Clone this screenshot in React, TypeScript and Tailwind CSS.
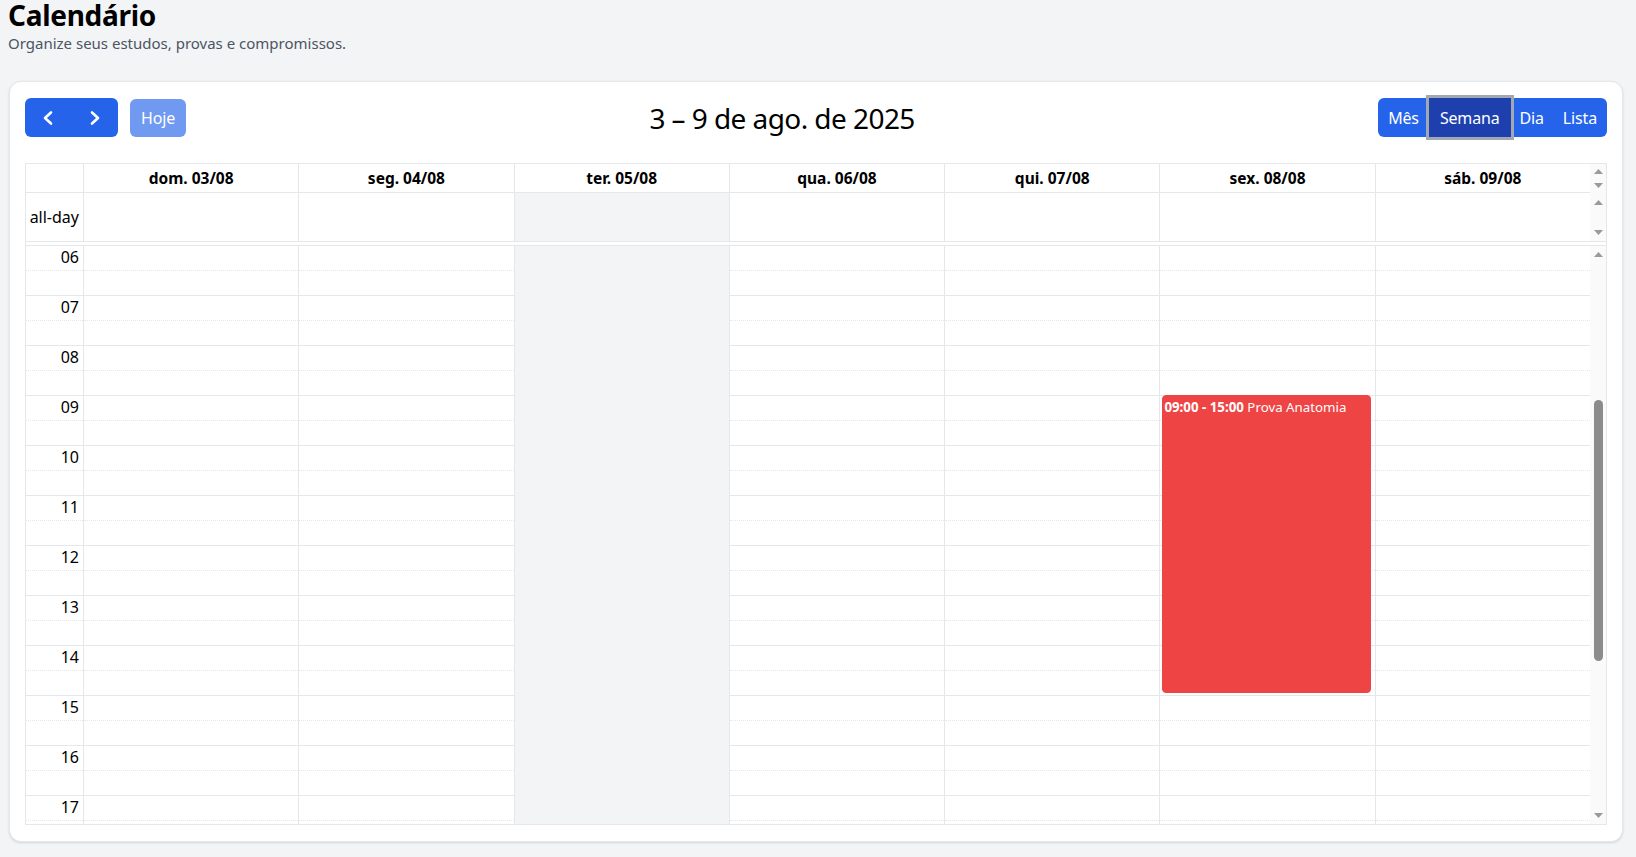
import React from "react";

const days = [
  "dom. 03/08",
  "seg. 04/08",
  "ter. 05/08",
  "qua. 06/08",
  "qui. 07/08",
  "sex. 08/08",
  "sáb. 09/08",
];
const TODAY = 2;
const EVENT_DAY = 5;
const slots = Array.from({ length: 24 }, (_, i) => i); // 06:00 .. 17:30

function Up() {
  return (
    <svg width="9" height="5" viewBox="0 0 9 5" className="block">
      <polygon points="0,5 4.5,0 9,5" fill="#9a9a9a" />
    </svg>
  );
}
function Down() {
  return (
    <svg width="9" height="5" viewBox="0 0 9 5" className="block">
      <polygon points="0,0 9,0 4.5,5" fill="#9a9a9a" />
    </svg>
  );
}

function Chevron({ dir }: { dir: "left" | "right" }) {
  return (
    <svg width="14" height="16" viewBox="0 0 14 16" fill="none" className="block">
      <polyline
        points={dir === "left" ? "10,2.5 4,8 10,13.5" : "4,2.5 10,8 4,13.5"}
        stroke="white"
        strokeWidth="2.6"
        strokeLinecap="round"
        strokeLinejoin="round"
      />
    </svg>
  );
}

function SlotCell({ i, today }: { i: number; today?: boolean }) {
  const minor = i % 2 === 0;
  return (
    <div
      className={
        "h-[25px] shrink-0 border-b " +
        (today
          ? "border-transparent"
          : minor
          ? "border-dotted border-[#e5e7eb]"
          : "border-solid border-[#e5e7eb]")
      }
    />
  );
}

export default function App() {
  return (
    <div className="min-h-screen bg-[#f3f4f6] pl-2 pr-[13px] font-['Noto_Sans',sans-serif] text-black">
      <h1 className="text-[28px] font-bold leading-[30px] tracking-[-0.01em] text-black">Calendário</h1>
      <p className="mt-[3px] text-[15px] leading-5 text-[#4b5563]">
        Organize seus estudos, provas e compromissos.
      </p>

      <div className="ml-px mt-[28px] rounded-xl border border-[#e5e7eb] bg-white px-[15px] pb-4 pt-4 shadow-sm">
        {/* Toolbar */}
        <div className="flex h-[39px] items-center justify-between">
          <div className="flex items-center gap-3">
            <div className="flex h-[39px]">
              <button className="flex h-[39px] w-[46.5px] items-center justify-center rounded-l-md bg-[#2563eb]">
                <Chevron dir="left" />
              </button>
              <button className="flex h-[39px] w-[46.5px] items-center justify-center rounded-r-md bg-[#2563eb]">
                <Chevron dir="right" />
              </button>
            </div>
            <button className="h-[38px] rounded-md bg-[#2563eb] px-[11px] text-[16px] leading-6 tracking-[-0.01em] text-white opacity-65">
              Hoje
            </button>
          </div>
          <h2 className="text-[28px] leading-[34px] tracking-[-0.02em] text-black">3 – 9 de ago. de 2025</h2>
          <div className="flex h-[39px] text-[16px] leading-6 tracking-[-0.01em] text-white">
            <button className="h-[39px] rounded-l-md bg-[#2563eb] px-[10px]">Mês</button>
            <button className="relative z-10 h-[39px] bg-[#1e40af] px-[11px] shadow-[0_0_0_3px_#a0a8b1]">
              Semana
            </button>
            <button className="h-[39px] bg-[#2563eb] px-[9px]">Dia</button>
            <button className="h-[39px] rounded-r-md bg-[#2563eb] px-[10px]">Lista</button>
          </div>
        </div>

        {/* Time grid */}
        <div className="mt-[26px] border border-[#e5e7eb]">
          {/* Header */}
          <div className="flex">
            <div className="flex h-[29px] flex-1 border-b border-[#e5e7eb]">
              <div className="w-[58px] shrink-0 border-r border-[#e5e7eb]" />
              {days.map((d, i) => (
                <div
                  key={d}
                  className={
                    "flex min-w-0 flex-1 items-center justify-center text-[15.5px] font-bold leading-7 text-black " +
                    (i < 6 ? "border-r border-[#e5e7eb]" : "")
                  }
                >
                  {d}
                </div>
              ))}
            </div>
            <div className="flex h-[29px] w-[16px] shrink-0 flex-col bg-[#fafafa]">
              <div className="flex h-[14px] items-center justify-center">
                <Up />
              </div>
              <div className="flex h-[14px] items-center justify-center">
                <Down />
              </div>
            </div>
          </div>

          {/* All-day */}
          <div className="flex h-[49px] border-b border-[#e5e7eb]">
            <div className="flex flex-1">
              <div className="flex w-[58px] shrink-0 items-center justify-end border-r border-[#e5e7eb] pr-1 text-[16px] leading-5 text-black">
                all-day
              </div>
              {days.map((d, i) => (
                <div
                  key={d}
                  className={
                    "min-w-0 flex-1 " +
                    (i < 6 ? "border-r border-[#e5e7eb] " : "") +
                    (i === TODAY ? "bg-[#f3f4f6]" : "")
                  }
                />
              ))}
            </div>
            <div className="flex w-[16px] shrink-0 flex-col justify-between bg-[#fafafa]">
              <div className="flex h-[18px] items-center justify-center">
                <Up />
              </div>
              <div className="flex h-[18px] items-center justify-center">
                <Down />
              </div>
            </div>
          </div>

          {/* Divider */}
          <div className="box-content h-[3px] border-b border-[#e5e7eb]" />

          {/* Body */}
          <div className="flex h-[578px] overflow-hidden">
            <div className="flex flex-1">
              {/* Axis */}
              <div className="flex w-[58px] shrink-0 flex-col border-r border-[#e5e7eb]">
                {slots.map((i) => (
                  <div
                    key={i}
                    className={
                      "h-[25px] shrink-0 border-b border-[#e5e7eb] pr-1 pt-px text-right text-[16px] leading-5 text-black " +
                      (i % 2 === 0 ? "border-dotted" : "border-solid")
                    }
                  >
                    {i % 2 === 0 ? String(6 + i / 2).padStart(2, "0") : ""}
                  </div>
                ))}
              </div>
              {/* Day columns */}
              {days.map((d, di) => (
                <div
                  key={d}
                  className={
                    "relative flex min-w-0 flex-1 flex-col " +
                    (di < 6 ? "border-r border-[#e5e7eb] " : "") +
                    (di === TODAY ? "bg-[#f3f4f6]" : "")
                  }
                >
                  {slots.map((i) => (
                    <SlotCell key={i} i={i} today={di === TODAY} />
                  ))}
                  {di === EVENT_DAY && (
                    <div className="absolute left-[2px] right-[4px] top-[149px] h-[298px] overflow-hidden rounded-[4px] border border-[#ef4444] bg-[#ef4444] px-px pt-[2px] text-[13.3px] leading-[18px] text-white">
                      <span className="font-bold">09:00 - 15:00</span> Prova Anatomia
                    </div>
                  )}
                </div>
              ))}
            </div>
            {/* Scrollbar */}
            <div className="flex w-[16px] shrink-0 flex-col bg-[#fafafa]">
              <div className="flex h-[17px] shrink-0 items-center justify-center">
                <Up />
              </div>
              <div className="flex-1">
                <div className="mx-auto mt-[137px] h-[261px] w-[9px] rounded-full bg-[#8b8b8b]" />
              </div>
              <div className="flex h-[17px] shrink-0 items-center justify-center">
                <Down />
              </div>
            </div>
          </div>
        </div>
      </div>
    </div>
  );
}
